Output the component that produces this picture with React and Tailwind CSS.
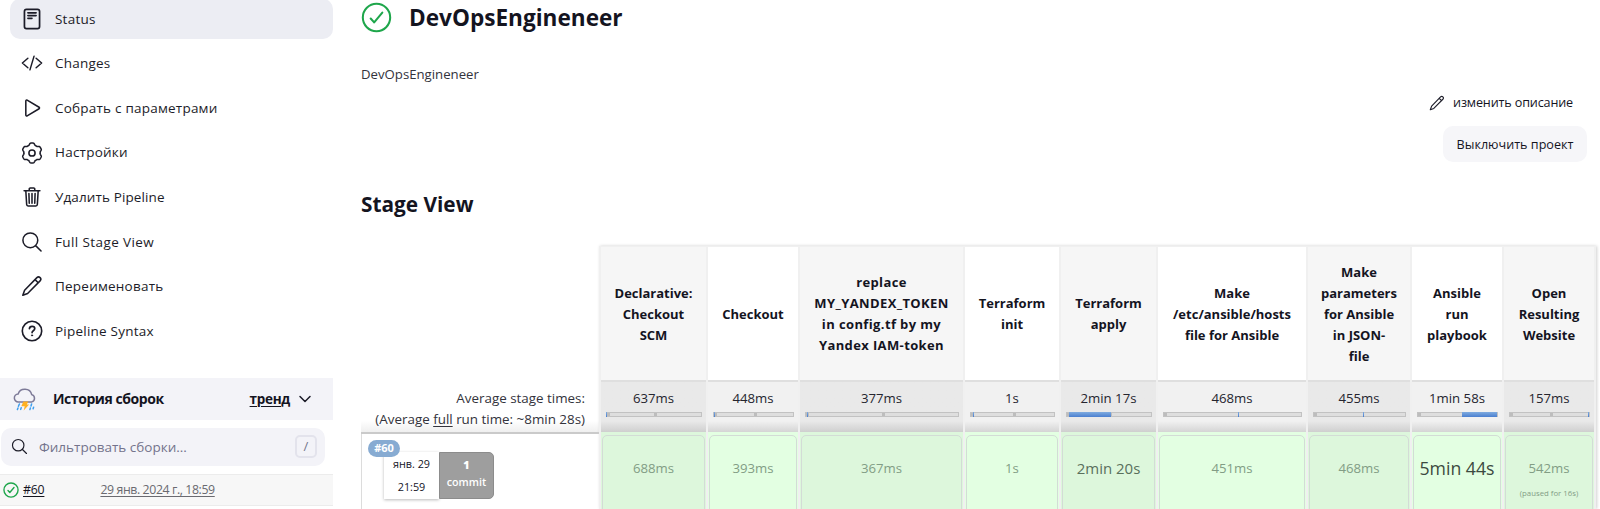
import React from "react";

const stroke = {
  fill: "none",
  stroke: "#1c1c28",
  strokeLinecap: "round",
  strokeLinejoin: "round",
  strokeWidth: 32,
};

function Svg({ className, children }) {
  return (
    <svg viewBox="0 0 512 512" className={className} {...stroke}>
      {children}
    </svg>
  );
}

// Six-lobed gear outline.
const gearPoints = Array.from({ length: 120 }, (_, i) => {
  const a = (i / 120) * Math.PI * 2;
  const wave = Math.max(-1, Math.min(1, 1.6 * Math.cos(6 * a) + 0.2));
  const r = 211 + 21 * wave;
  return (256 + r * Math.sin(a)).toFixed(1) + "," + (256 - r * Math.cos(a)).toFixed(1);
}).join(" ");

const StatusIcon = () => (
  <Svg className="size-[22px]">
    <rect x="80" y="32" width="352" height="448" rx="48" strokeWidth="40" />
    <path d="M160 112h192M160 176h192M160 240h96" strokeWidth="38" />
  </Svg>
);
const CodeIcon = () => (
  <Svg className="size-[22px]">
    <path d="M160 368L32 256l128-112M352 368l128-112-128-112M304 96l-96 320" strokeWidth="34" />
  </Svg>
);
const PlayIcon = () => (
  <Svg className="size-[22px]">
    <path d="M112 91v330c0 17.440 17 28.520 31 20.160l277.900-168.370c12.120-7.250 12.120-26.330 0-33.580L143 70.840c-14-8.360-31 2.720-31 20.160z" strokeWidth="36" />
  </Svg>
);
const GearIcon = () => (
  <Svg className="size-[22px]">
    <circle cx="256" cy="256" r="72" strokeWidth="36" />
    <polygon points={gearPoints} strokeWidth="36" />
  </Svg>
);
const TrashIcon = () => (
  <Svg className="size-[22px]">
    <path d="M112 112l20 320c.95 18.490 14.400 32 32 32h184c17.670 0 30.870-13.510 32-32l20-320M72 112h368M192 112V72a23.930 23.930 0 0124-24h80a23.930 23.930 0 0124 24v40M256 176v224M184 176l8 224M328 176l-8 224" strokeWidth="36" />
  </Svg>
);
const SearchIcon = ({ className = "size-[22px]" }) => (
  <Svg className={className}>
    <path d="M221.090 64a157.090 157.090 0 10157.090 157.090A157.100 157.100 0 00221.090 64zM338.290 338.290L448 448" transform="translate(-26 -26) scale(1.1)" />
  </Svg>
);
const PencilIcon = ({ className = "size-[22px]" }) => (
  <Svg className={className}>
    <path d="M42 472L84 356L370 62a50 50 0 0174 74L154 430zM328 108L400 180" strokeWidth="36" />
  </Svg>
);
const HelpIcon = () => (
  <Svg className="size-[22px]">
    <circle cx="256" cy="256" r="226" strokeWidth="38" />
    <path d="M196 200c2-34 28-54 62-54 36 0 62 22 62 54 0 50-62 50-62 92" strokeWidth="40" />
    <circle cx="257" cy="358" r="14" fill="#1c1c28" strokeWidth="20" />
  </Svg>
);
const CheckCircle = ({ className, width }) => (
  <svg viewBox="0 0 512 512" className={className} fill="none" stroke="#1ea64b" strokeLinecap="round" strokeLinejoin="round" strokeWidth={width}>
    <circle cx="256" cy="256" r="226" />
    <path d="M352 176L217.600 336 160 272" />
  </svg>
);
const StormIcon = () => (
  <svg viewBox="0 0 24 24" className="size-6" fill="none">
    <path d="M6.600 14.900H5.400a3.900 3.900 0 01-.3-7.800A7 6.600 0 0118.700 7.600a3.800 3.800 0 01.1 7.300H6.600z" stroke="#7d7a98" strokeWidth="1.500" />
    <path d="M10.300 14.400h5l-1.500 3h2.300l-5.400 6.100 1-4.300H8.300z" fill="#ffb020" />
    <path d="M6.400 17l-1 2.200M18.600 17l-.6 2M5 21l-.6 1.600M8.200 20.800l-.5 1.600M17.400 21l-.5 1.600M20.600 20.200l-.5 1.600" stroke="#3d9ff0" strokeWidth="1.500" strokeLinecap="round" />
  </svg>
);

const nav = [
  { label: "Status", Icon: StatusIcon, active: true },
  { label: "Changes", Icon: CodeIcon },
  { label: "Собрать с параметрами", Icon: PlayIcon },
  { label: "Настройки", Icon: GearIcon },
  { label: "Удалить Pipeline", Icon: TrashIcon, spacing: "tracking-[0.120px]" },
  { label: "Full Stage View", Icon: SearchIcon, spacing: "tracking-[0.400px]" },
  { label: "Переименовать", Icon: PencilIcon },
  { label: "Pipeline Syntax", Icon: HelpIcon },
];

function Sidebar() {
  return (
    <aside className="w-[333px] shrink-0">
      <nav className="-mt-[1px] ml-[10px] flex flex-col gap-[5px]">
        {nav.map(({ label, Icon, active, spacing }) => (
          <a
            key={label}
            className={
              "flex h-[39.600px] items-center gap-3 rounded-[10px] pl-[11px] text-[13.500px] font-medium text-[#1c1c28] " +
              (spacing || "tracking-[0.220px]") +
              (active ? " bg-[#ecedf3]" : "")
            }
          >
            <Icon />
            <span>{label}</span>
          </a>
        ))}
      </nav>
      <section className="mt-[27px]">
        <header className="flex h-[42px] items-center bg-[#f3f3f8] pl-[13px] text-[14px] font-bold text-[#14141f]">
          <StormIcon />
          <h2 className="ml-4 flex-1 tracking-[-0.430px]">История сборок</h2>
          <a className="text-[13.500px] tracking-[-0.300px] underline decoration-1 underline-offset-2">тренд</a>
          <Svg className="mr-[20px] ml-[7px] size-[16px]">
            <path d="M96 176l160 160 160-160" strokeWidth="48" />
          </Svg>
        </header>
        <div className="mt-2 ml-px flex h-[38px] w-[324px] items-center rounded-[10px] bg-[#f3f3f8] pr-2 pl-[10px]">
          <SearchIcon className="size-[17px]" />
          <span className="ml-[11px] flex-1 text-[13.500px] font-medium text-[#73738c]">Фильтровать сборки...</span>
          <kbd className="flex h-[23px] w-[22px] items-center justify-center rounded-[5px] border-2 border-[#e3e3ec] font-['Open_Sans',sans-serif] text-[13px] text-[#73738c]">/</kbd>
        </div>
        <div className="mt-2 flex h-[32px] items-center border-y border-[#ececec] bg-[#f7f7f7] pl-[3px] text-[12.300px]">
          <CheckCircle className="size-4" width={44} />
          <a className="ml-[4px] tracking-[-0.200px] text-[#14141f] underline underline-offset-2">#60</a>
          <span className="w-[56px]" />
          <a className="tracking-[-0.390px] text-[#6a6a70] underline underline-offset-2">29 янв. 2024 г., 18:59</a>
        </div>
      </section>
    </aside>
  );
}

const stages = [
  { w: "w-[107px]", name: ["Declarative:", "Checkout", "SCM"], avg: "637ms", run: "688ms", start: 0, len: 1 },
  { w: "w-[92px]", name: ["Checkout"], avg: "448ms", run: "393ms", start: 1, len: 1 },
  { w: "w-[165px]", name: ["replace", "MY_YANDEX_TOKEN", "in config.tf by my", "Yandex IAM-token"], spacing: "tracking-[0.380px]", avg: "377ms", run: "367ms", start: 1.200, len: 0.600 },
  { w: "w-[96px]", name: ["Terraform", "init"], avg: "1s", run: "1s", start: 3.500, len: 1 },
  { w: "w-[97px]", name: ["Terraform", "apply"], avg: "2min 17s", run: "2min 20s", size: "text-[15px] text-[#59705c]", start: 4, len: 49.500 },
  { w: "w-[150px]", name: ["Make", "/etc/ansible/hosts", "file for Ansible"], avg: "468ms", run: "451ms", start: 54.400, len: 0.700 },
  { w: "w-[104px]", name: ["Make", "parameters", "for Ansible", "in JSON-", "file"], avg: "455ms", run: "468ms", start: 55.300, len: 1 },
  { w: "w-[92px]", name: ["Ansible", "run", "playbook"], avg: "1min 58s", run: "5min 44s", size: "text-[17.700px] text-[#3c4a40]", start: 57.500, len: 43.500 },
  { w: "w-[92px]", name: ["Open", "Resulting", "Website"], avg: "157ms", run: "542ms", note: "(paused for 16s)", start: 99.500, len: 1.500 },
];

// Where the stage falls within the full run, with markers at the start and middle.
function Meter({ start, len, center }) {
  return (
    <div className="relative mr-[4px] ml-[5px] mt-[3px] h-[5px] border border-[#c2c2c2] bg-[#dedede]">
      <i className="absolute top-0 left-0 h-full w-[3px] bg-[#bdbdbd]" />
      {center && <i className="absolute top-0 left-1/2 h-full w-[3px] bg-[#bdbdbd]" />}
      <i
        className="absolute -top-px -ml-px h-[5px] min-w-px bg-linear-to-b from-[#7fabdf] to-[#4a7fd0]"
        style={{ left: start + "%", width: len + "%" }}
      />
    </div>
  );
}

function StageColumn({ stage, odd }) {
  return (
    <div className={"flex shrink-0 flex-col border-r-2 border-[#f0f0f0] " + stage.w}>
      <div className={"flex h-[135px] shrink-0 flex-col items-center justify-center border-b-2 border-[#dfdfdf] pt-px text-center text-[13px] leading-[21px] font-bold whitespace-nowrap " + (stage.spacing || "tracking-normal") + (odd ? " bg-[#f6f6f6]" : " bg-white")}>
        {stage.name.map((line) => (
          <span key={line}>{line}</span>
        ))}
      </div>
      <div className={"h-[50px] shrink-0 bg-linear-to-b from-78% pt-[6px] text-center text-[13.200px] leading-[21px] text-[#25252f] " + (odd ? "from-[#e9e9e9] to-[#cfcfcf]" : "from-[#f1f1f1] to-[#d5d5d5]")}>
        {stage.avg}
        <Meter start={stage.start} len={stage.len} center={stage.start < 50 || stage.start > 90} />
      </div>
      <div className={"h-[77px] shrink-0 px-px pt-[3px] " + (odd ? "bg-[#ddf7dc]" : "bg-[#e3ffe2]")}>
        <div className="relative flex h-[90px] justify-center rounded-[5px] border border-[#d3dcd6] pt-[20px] whitespace-nowrap">
          <span className={"leading-[24px] " + (stage.size || "text-[13.200px] text-[#829d85]")}>{stage.run}</span>
          {stage.note && <span className="absolute top-[51px] text-[7.800px] leading-[12px] text-[#829d85]">{stage.note}</span>}
        </div>
      </div>
    </div>
  );
}

function StageView() {
  return (
    <div className="flex h-[263px]">
      <div className="flex w-[238px] shrink-0 flex-col">
        <div className="h-[188px] shrink-0 border-b-2 border-[#cacaca] bg-linear-to-b from-white from-94% to-[#efefef] pt-[142px] pr-[14px] text-right text-[13.400px] leading-[21px] text-[#33333c]">
          Average stage times:
          <br />
          (Average <u className="underline-offset-2">full</u> run time: ~8min 28s)
        </div>
        <div className="relative flex-1 border-l border-[#dcdcdc] pt-[18px] pl-[22px]">
          <span className="absolute top-[6px] left-[6px] z-10 flex h-[17px] w-8 items-center justify-center rounded-full bg-[#87abd2] text-[11px] font-bold text-white">#60</span>
          <div className="flex h-[47px] w-[110px] text-center">
            <div className="w-[55px] text-[10.800px] leading-[23px] shadow-[0_1px_3px_#bbb]">
              янв. 29
              <br />
              21:59
            </div>
            <div className="w-[55px] rounded-r-[5px] border border-[#8c8c8c] bg-[#9e9e9e] pt-[4px] text-[10.700px] leading-[17px] font-semibold text-white">
              <b>1</b>
              <br />
              commit
            </div>
          </div>
        </div>
      </div>
      <div className="flex border-t border-l-2 border-[#f0f0f0] shadow-[1px_0_3px_#d0d0d0]">
        {stages.map((stage, i) => (
          <StageColumn key={i} stage={stage} odd={i % 2 === 0} />
        ))}
      </div>
    </div>
  );
}

export default function App() {
  return (
    <div className="flex h-[509px] w-[1600px] overflow-hidden bg-white font-['Open_Sans','Noto_Sans',sans-serif] text-[#14141f]">
      <Sidebar />
      <main className="ml-7 flex-1">
        <header className="flex h-[35px] items-center">
          <CheckCircle className="size-[31px]" width={34} />
          <h1 className="ml-[17px] text-[22.600px] leading-[32px] font-bold">DevOpsEngineneer</h1>
        </header>
        <p className="mt-[29px] h-5 text-[13.200px] leading-5 text-[#33333c]">DevOpsEngineneer</p>
        <div className="flex flex-col items-end pr-[13px] text-[12.600px] leading-5">
          <a className="mt-[9px] flex items-center pr-[14px] tracking-[-0.150px]">
            <PencilIcon className="mr-2 size-4" />
            изменить описание
          </a>
          <button className="mt-[13px] flex h-[36px] w-[144px] items-center justify-center rounded-[10px] bg-[#f6f6f9] pt-[2px]">Выключить проект</button>
        </div>
        <h2 className="mt-[26px] mb-[26px] text-[20.800px] leading-[32px] font-bold">Stage View</h2>
        <StageView />
      </main>
    </div>
  );
}
